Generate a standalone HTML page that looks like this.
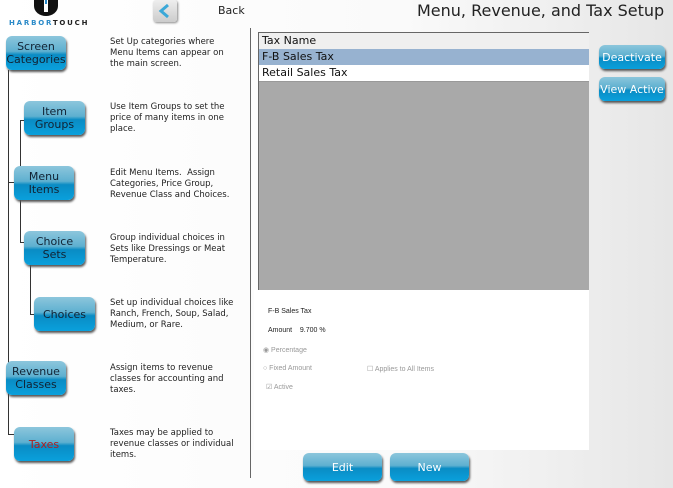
<!DOCTYPE html>
<html><head><style>
*{box-sizing:border-box}
body{margin:0;width:673px;height:488px;overflow:hidden;position:relative;font-family:"DejaVu Sans","Liberation Sans",sans-serif;background:linear-gradient(90deg,#fff 0%,#fafafa 60%,#e6e6e6 100%);}
.a{position:absolute}
.btn{position:absolute;border-radius:6px;background:linear-gradient(#8cc6dc 0%,#5eb0d0 45%,#0a8cc4 55%,#0aa0dc 100%);box-shadow:1px 2px 2px #555;color:#123;font-size:11px;text-align:center;display:flex;align-items:center;justify-content:center;line-height:13px}
.w{color:#fff}
.d{position:absolute;left:110px;font-size:8.5px;line-height:11px;color:#222;width:125px}
.ln{position:absolute;background:#333}
.s{font-family:"Liberation Sans",sans-serif;font-size:7px;color:#999;position:absolute}
</style></head><body>
<svg class="a" style="left:34px;top:0" width="24" height="16"><path d="M0 0h24v6a12 10 0 0 1-24 0z" fill="#111"/><rect x="10" y="0" width="4" height="12" fill="#fff"/><rect x="11" y="0" width="2" height="4" fill="#2a8ac8"/></svg>
<div class="a" style="left:9px;top:19px;font-size:7px;letter-spacing:1.8px;font-weight:bold;color:#2a8ac8">HARBOR<span style="color:#222">TOUCH</span></div>
<div class="a" style="left:153px;top:0;width:24px;height:22px;border-radius:3px;background:linear-gradient(#eee,#ccc);box-shadow:1px 1px 2px #888"><svg width="24" height="22"><path d="M15 5L8 11l7 6" stroke="#3aa8d8" stroke-width="3" fill="none"/></svg></div>
<div class="a" style="left:218px;top:4px;font-size:11px;color:#222">Back</div>
<div class="a" style="left:417px;top:1px;font-size:16px;color:#222">Menu, Revenue, and Tax Setup</div>

<div class="ln" style="left:8px;top:70px;width:1px;height:364px"></div>
<div class="ln" style="left:8px;top:182px;width:6px;height:1px"></div>
<div class="ln" style="left:20px;top:120px;width:1px;height:122px"></div>
<div class="ln" style="left:20px;top:120px;width:4px;height:1px"></div>
<div class="ln" style="left:20px;top:242px;width:4px;height:1px"></div>
<div class="ln" style="left:30px;top:255px;width:1px;height:60px"></div>
<div class="ln" style="left:30px;top:314px;width:4px;height:1px"></div>
<div class="ln" style="left:8px;top:434px;width:6px;height:1px"></div>

<div class="btn" style="left:6px;top:36px;width:60px;height:34px">Screen<br>Categories</div>
<div class="btn" style="left:24px;top:101px;width:61px;height:34px">Item<br>Groups</div>
<div class="btn" style="left:14px;top:166px;width:60px;height:34px">Menu<br>Items</div>
<div class="btn" style="left:24px;top:231px;width:61px;height:34px">Choice<br>Sets</div>
<div class="btn" style="left:34px;top:297px;width:61px;height:34px">Choices</div>
<div class="btn" style="left:6px;top:361px;width:60px;height:34px">Revenue<br>Classes</div>
<div class="btn" style="left:14px;top:427px;width:60px;height:34px;color:#b02020">Taxes</div>

<div class="d" style="top:37px">Set Up categories where Menu Items can appear on the main screen.</div>
<div class="d" style="top:102px">Use Item Groups to set the price of many items in one place.</div>
<div class="d" style="top:168px">Edit Menu Items.&nbsp; Assign Categories, Price Group, Revenue Class and Choices.</div>
<div class="d" style="top:233px">Group individual choices in Sets like Dressings or Meat Temperature.</div>
<div class="d" style="top:298px">Set up individual choices like Ranch, French, Soup, Salad, Medium, or Rare.</div>
<div class="d" style="top:363px">Assign items to revenue classes for accounting and taxes.</div>
<div class="d" style="top:428px">Taxes may be applied to revenue classes or individual items.</div>

<div class="a" style="left:250px;top:28px;width:1px;height:450px;background:#666"></div>
<div class="a" style="left:258px;top:32px;width:331px;height:258px;background:#a9a9a9;border-top:1px solid #666;border-left:1px solid #666"></div>
<div class="a" style="left:259px;top:33px;width:330px;height:16px;background:#efefef;font-size:11px;color:#111;padding-left:3px;line-height:16px">Tax Name</div>
<div class="a" style="left:259px;top:49px;width:330px;height:16px;background:#97b2d0;font-size:11px;color:#111;padding-left:3px;line-height:16px">F-B Sales Tax</div>
<div class="a" style="left:259px;top:65px;width:330px;height:17px;background:#fff;font-size:11px;color:#111;padding-left:3px;line-height:16px;border-bottom:1px solid #999">Retail Sales Tax</div>
<div class="a" style="left:254px;top:290px;width:335px;height:160px;background:#fff"></div>
<div class="a" style="left:268px;top:308px;font-family:'Liberation Sans',sans-serif;font-size:7px;color:#222">F-B Sales Tax</div>
<div class="a" style="left:268px;top:327px;font-family:'Liberation Sans',sans-serif;font-size:7px;color:#222">Amount &nbsp;&nbsp; 9.700 %</div>
<div class="s" style="left:263px;top:346px">◉ Percentage</div>
<div class="s" style="left:263px;top:365px">○ Fixed Amount</div>
<div class="s" style="left:367px;top:365px">☐ Applies to All Items</div>
<div class="s" style="left:266px;top:383px">☑ Active</div>

<div class="btn w" style="left:599px;top:45px;width:66px;height:24px">Deactivate</div>
<div class="btn w" style="left:599px;top:77px;width:66px;height:24px">View Active</div>
<div class="btn w" style="left:303px;top:453px;width:79px;height:28px">Edit</div>
<div class="btn w" style="left:390px;top:453px;width:79px;height:28px">New</div>
</body></html>
